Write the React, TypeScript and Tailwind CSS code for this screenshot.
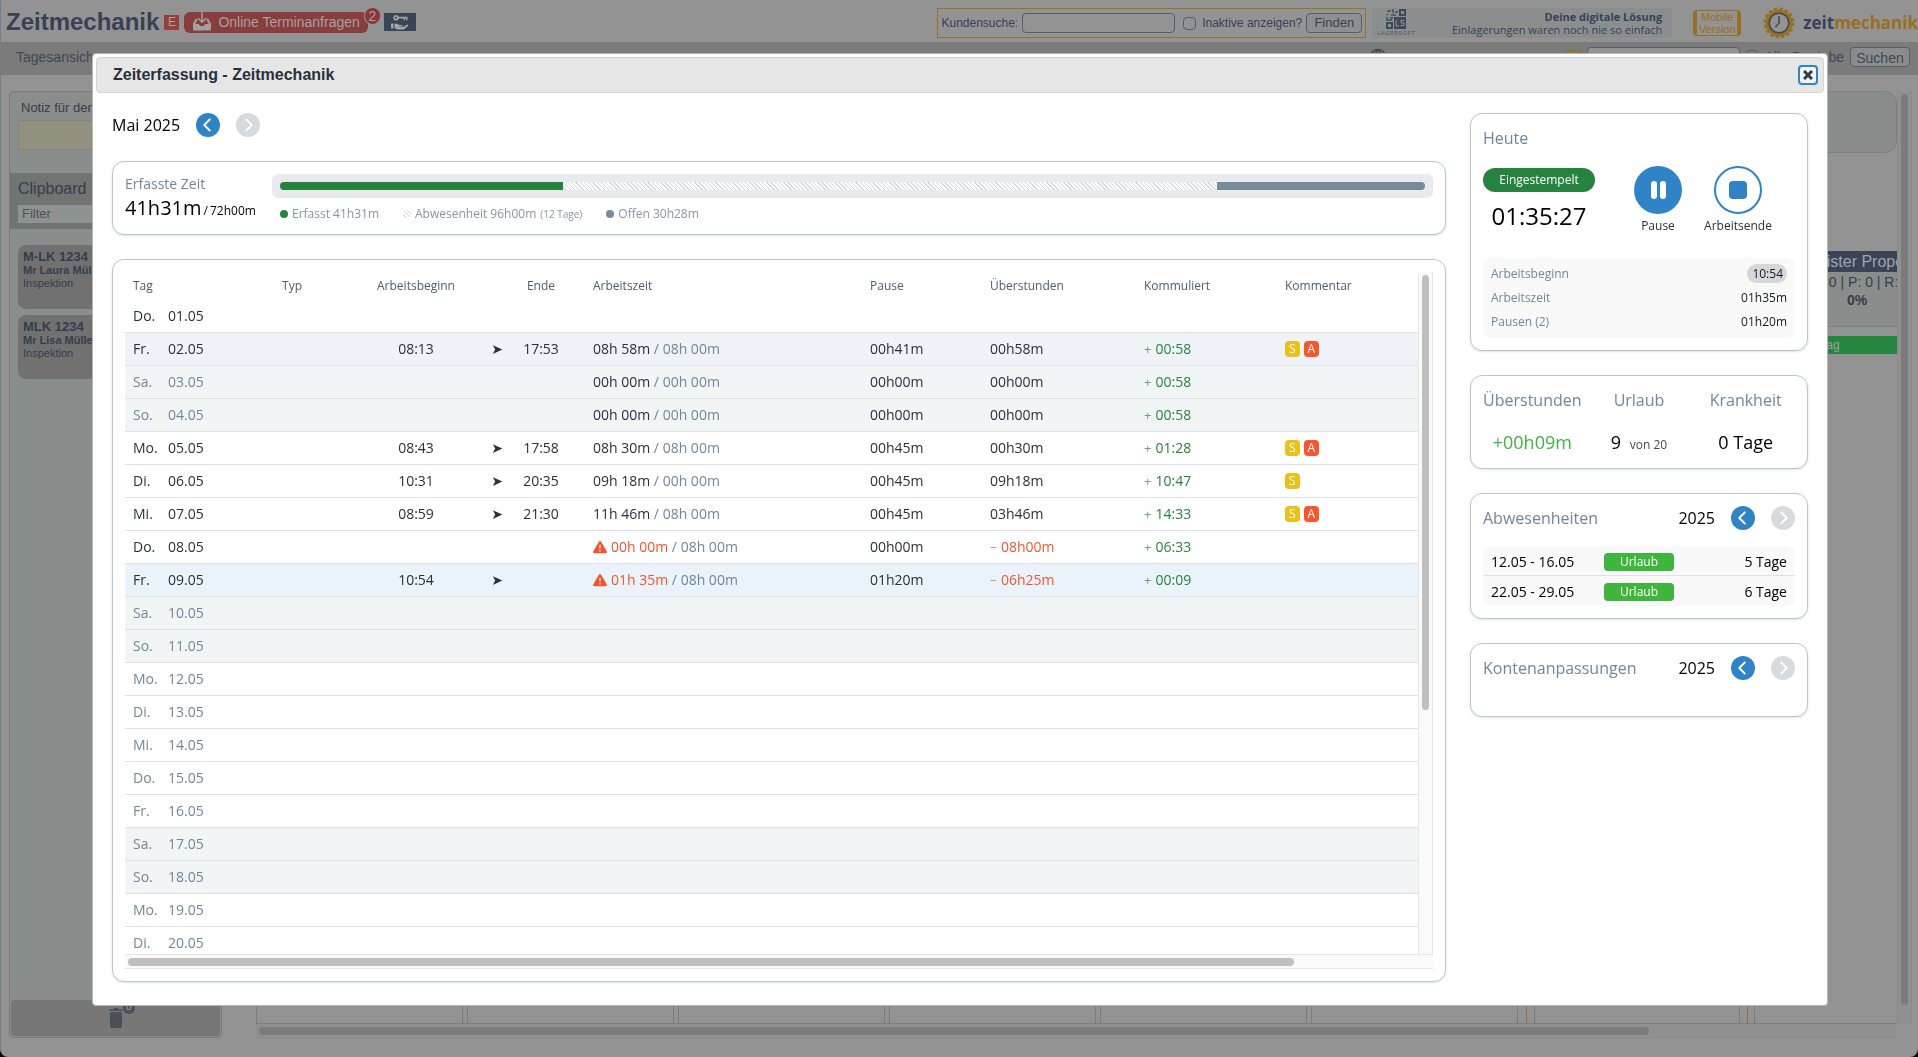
import React from 'react'
import { ChevronLeft, ChevronRight, Globe } from 'lucide-react'
import { FaTriangleExclamation } from 'react-icons/fa6'

interface Day {
  day: string
  date: string
  start?: string
  end?: string
  worked?: string
  target?: string
  pause?: string
  overtime?: string
  total?: string
  tags?: string[]
  state?: 'hover' | 'current'
}

const days: Day[] = [
  { day: 'Do.', date: '01.05' },
  { day: 'Fr.', date: '02.05', start: '08:13', end: '17:53', worked: '08h 58m', target: '08h 00m', pause: '00h41m', overtime: '00h58m', total: '00:58', tags: ['S', 'A'], state: 'hover' },
  { day: 'Sa.', date: '03.05', worked: '00h 00m', target: '00h 00m', pause: '00h00m', overtime: '00h00m', total: '00:58' },
  { day: 'So.', date: '04.05', worked: '00h 00m', target: '00h 00m', pause: '00h00m', overtime: '00h00m', total: '00:58' },
  { day: 'Mo.', date: '05.05', start: '08:43', end: '17:58', worked: '08h 30m', target: '08h 00m', pause: '00h45m', overtime: '00h30m', total: '01:28', tags: ['S', 'A'] },
  { day: 'Di.', date: '06.05', start: '10:31', end: '20:35', worked: '09h 18m', target: '00h 00m', pause: '00h45m', overtime: '09h18m', total: '10:47', tags: ['S'] },
  { day: 'Mi.', date: '07.05', start: '08:59', end: '21:30', worked: '11h 46m', target: '08h 00m', pause: '00h45m', overtime: '03h46m', total: '14:33', tags: ['S', 'A'] },
  { day: 'Do.', date: '08.05', worked: '00h 00m', target: '08h 00m', pause: '00h00m', overtime: '-08h00m', total: '06:33' },
  { day: 'Fr.', date: '09.05', start: '10:54', worked: '01h 35m', target: '08h 00m', pause: '01h20m', overtime: '-06h25m', total: '00:09', state: 'current' },
  { day: 'Sa.', date: '10.05' },
  { day: 'So.', date: '11.05' },
  { day: 'Mo.', date: '12.05' },
  { day: 'Di.', date: '13.05' },
  { day: 'Mi.', date: '14.05' },
  { day: 'Do.', date: '15.05' },
  { day: 'Fr.', date: '16.05' },
  { day: 'Sa.', date: '17.05' },
  { day: 'So.', date: '18.05' },
  { day: 'Mo.', date: '19.05' },
  { day: 'Di.', date: '20.05' },
]

const segments = [
  { name: 'erfasst', hours: 41.5, className: 'rounded-l bg-[#26833f]' },
  { name: 'abwesenheit', hours: 96, className: 'bg-[repeating-linear-gradient(45deg,#fff_0px,#fff_2px,#d5d8db_2px,#d5d8db_3px)]' },
  { name: 'offen', hours: 30.5, className: 'rounded-r bg-[#778b9b]' },
]

const card = 'rounded-xl border border-[#b9c6d0] bg-white p-3 shadow-sm'

function Pager({ label }: { label: string }) {
  return (
    <div className="flex h-6 items-center gap-4 text-base text-black">
      <span>{label}</span>
      <button aria-label="Zurück" className="flex size-6 items-center justify-center rounded-full bg-[#3084c6] text-white">
        <ChevronLeft size={24} strokeWidth={2} className="pr-0.5" />
      </button>
      <button aria-label="Weiter" disabled className="flex size-6 items-center justify-center rounded-full bg-[#d5dbde] text-white">
        <ChevronRight size={24} strokeWidth={2} className="pl-0.5" />
      </button>
    </div>
  )
}

function OnlineIcon() {
  return (
    <svg width="20" height="20" viewBox="0 0 20 20" fill="currentColor">
      <path d="M9.300 0h1.400v8.500l2.800-2.700 1 1L10 11.200 5.500 6.800l1-1 2.800 2.700z" />
      <path d="M4 6.500 1 11.500V17a1.500 1.500 0 0 0 1.500 1.500h15A1.500 1.500 0 0 0 19 17v-5.500l-3-5h-.8l-.7 1.400 2.300 4.100h-3.600L11.800 14H8.200l-1.400-2H3.200l2.300-4.100-.7-1.400z" />
    </svg>
  )
}

function KeyIcon() {
  return (
    <svg width="18" height="17" viewBox="0 0 18 17" fill="currentColor">
      <path fillRule="evenodd" d="M5 1a2.800 2.800 0 1 0 2.700 3.600h4.800V6.200H14V4.600h1v1.600h1.500V2.800H7.700A2.800 2.800 0 0 0 5 1zm0 1.800a1 1 0 1 1 0 2 1 1 0 0 1 0-2z" />
      <path d="M0 9.500h2.500v5H0zM3.500 9.800h3l2 1.200h2.500c1 0 1 1.300 0 1.300H8.500v.5h4l3.300-2.100c1-.6 2 .4 1.200 1.200L13.500 15c-.6.400-1 .6-2 .6H6L3.500 14z" />
    </svg>
  )
}

function GearLogo() {
  return (
    <svg width="32" height="32" viewBox="0 0 32 32">
      <circle cx="16" cy="16" r="14" fill="none" stroke="#966f20" strokeWidth="3" strokeDasharray="3.300 2.200" />
      <circle cx="16" cy="16" r="11.800" fill="#939393" stroke="#966f20" strokeWidth="3" />
      <circle cx="16" cy="16" r="9.800" fill="#939393" stroke="#3b4657" strokeWidth="1.500" />
      <path d="M16 9v7l-3.500 4" fill="none" stroke="#3b4657" strokeWidth="1.500" />
    </svg>
  )
}

function LagerLogo() {
  return (
    <div className="flex w-12 flex-col items-center">
      <svg width="20" height="20" viewBox="0 0 20 20" fill="#3f495b">
        <path d="M1 1h4v2H1zM6 0h2v4H6zM9 2h3v2H9zM0 5h3v1H0zM5 5h5v2H5zM0 8h2v4H0zM4 8h3v2H4zM1 10h5v2H1z" opacity=".7" />
        <path fillRule="evenodd" d="M13 0h7v7h-7zm2 2v3h3V2zM0 13h7v7H0zm2 2v3h3v-3z" />
        <path d="M8 8h12v12H8z" />
        <path d="M10 11v6h3M18 11.500h-3V14h3v2.500h-3.500" fill="none" stroke="#939696" />
      </svg>
      <span className="text-[6px] leading-2 tracking-widest text-[#4b5464]">LAGERSOFT</span>
    </div>
  )
}

function TrashIcon() {
  return (
    <svg width="14" height="20" viewBox="0 0 14 20" fill="#4b5055">
      <path d="M4.500 0h5v1.500H14V3H0V1.500h4.500zM1 4h12v14.500a1.500 1.500 0 0 1-1.500 1.500h-9A1.500 1.500 0 0 1 1 18.500z" />
    </svg>
  )
}

function Header() {
  return (
    <header className="flex h-[42px] items-center justify-between pl-[5px] text-[#384154]">
      <div className="flex items-center pt-0.5">
        <h1 className="text-2xl font-bold">Zeitmechanik</h1>
        <span className="mx-[5px] flex size-[15px] items-center justify-center bg-[#963f3b] text-xs text-[#b0a0a0]">E</span>
        <a href="#anfragen" className="relative flex h-[21px] items-center gap-1.5 rounded-md bg-[#873e3c] px-2 text-sm text-[#a7a0a0]">
          <OnlineIcon />
          Online Terminanfragen
          <span className="absolute -top-1 -right-3 flex h-4 w-[15px] items-center justify-center rounded-full bg-[#8b3735] text-sm ring-1 ring-[#939393]">2</span>
        </a>
        <a href="#vermietung" aria-label="Schlüssel" className="ml-4 flex h-[18px] w-8 items-center justify-center bg-[#3a4457] text-[#a0a3a8]">
          <KeyIcon />
        </a>
      </div>
      <div className="flex items-center pt-1">
        <form className="flex h-[30px] items-center border border-[#93722b] px-[3px] text-xs">
          <label htmlFor="kundensuche">Kundensuche:</label>
          <input id="kundensuche" className="ml-1 h-5 w-[153px] rounded-sm border border-[#565c69]" />
          <input id="inaktive" type="checkbox" className="mr-1.5 ml-2 size-[13px] appearance-none rounded-sm border border-[#565c69]" />
          <label htmlFor="inaktive">Inaktive anzeigen?</label>
          <button type="button" className="ml-1 h-5 w-14 rounded-sm border border-[#565c69] bg-[#8d8f90] text-[13px]">Finden</button>
        </form>
        <a href="#lagersoft" className="ml-1.5 flex h-[30px] w-[300px] items-center justify-between bg-[#8b8e8e] pr-2.5 font-[Open_Sans,sans-serif] text-[11px] leading-[13px]">
          <LagerLogo />
          <span className="text-right">
            <b className="block">Deine digitale Lösung</b>
            Einlagerungen waren noch nie so einfach
          </span>
        </a>
        <a href="#mobile" className="ml-[21px] h-[26px] w-12 rounded border-x-4 border-y border-[#966f20] text-center text-[11px] leading-3 text-[#966f20]">
          Mobile Version
        </a>
        <a href="#start" className="ml-[22px] flex items-center gap-2 font-[Open_Sans,sans-serif] text-[17px] font-bold">
          <GearLogo />
          <span>zeit<span className="text-[#966f20]">mechanik</span></span>
        </a>
      </div>
    </header>
  )
}

function Background() {
  return (
    <div className="flex h-screen flex-col overflow-hidden rounded-b-lg border-l border-[#71808f] bg-[#939393]">
      <Header />
      <nav className="flex h-[33px] shrink-0 items-center justify-between bg-[#7b7b7b] pr-2 pb-1 pl-[15px] text-sm text-[#3f4756]">
        <a href="#tag">Tagesansicht</a>
        <form className="flex items-center gap-1.5">
          <Globe size={18} className="mr-[174px]" />
          <i className="size-3.5 border-2 border-[#93722b]" />
          <input aria-label="Suche" className="h-5 w-[153px] rounded-sm border border-[#565c69] bg-[#939393]" />
          <input id="alle" type="checkbox" className="size-[13px] appearance-none rounded-sm border border-[#565c69]" />
          <label htmlFor="alle">Alle Betriebe</label>
          <button type="button" className="h-5 w-[60px] rounded-sm border border-[#565c69] bg-[#8a8d8d]">Suchen</button>
        </form>
      </nav>
      <div className="flex min-h-0 flex-1 pt-4 pb-[19px] pl-2">
        <aside className="flex w-[213px] shrink-0 flex-col rounded border border-[#777a7c] bg-[#8a8d8b] text-[#343d4d]">
          <div className="h-[81px] px-2 pt-1.5 text-[13px]">
            <label htmlFor="notiz" className="pl-[3px]">Notiz für den Tag</label>
            <input id="notiz" className="mt-0.5 block h-[30px] w-full border border-[#85857a] bg-[#929180]" />
          </div>
          <div className="h-14 bg-[#727373] px-2 pt-1 text-base">
            <h2>Clipboard (2)</h2>
            <input aria-label="Filter" placeholder="Filter" className="mt-1 block h-[18px] w-full bg-[#909191] px-1 text-[13px] placeholder:text-[#4b5362]" />
          </div>
          <div className="mt-4 flex flex-1 flex-col gap-1.5 px-2 text-[11px] leading-3">
            <article className="h-16 rounded-lg bg-[#717171] p-[5px]">
              <h3 className="text-[13px] leading-[14px] font-bold">M-LK 1234</h3>
              <b className="block leading-[13px]">Mr Laura Müller</b>
              Inspektion
            </article>
            <article className="h-16 rounded-lg bg-[#717171] p-[5px]">
              <h3 className="text-[13px] leading-[14px] font-bold">MLK 1234</h3>
              <b className="block leading-[13px]">Mr Lisa Müller</b>
              Inspektion
            </article>
          </div>
          <button aria-label="Papierkorb" className="m-px flex h-9 items-center justify-center rounded bg-[#777]">
            <span className="relative">
              <TrashIcon />
              <span className="absolute -top-2 -right-3 h-3.5 rounded-full bg-[#4b5055] px-[3px] text-[10px] leading-3.5 text-[#a0a3a8]">8</span>
            </span>
          </button>
        </aside>
        <section className="ml-[34px] flex min-w-0 flex-1 flex-col">
          <div className="h-[62px] shrink-0 rounded-xl border border-[#7c7f80] bg-[#898c8a]" />
          <div className="flex min-h-0 flex-1 gap-1 overflow-hidden border-b border-[#7c7c7c] pt-3">
            {[1, 2, 3, 4, 5, 6].map((n) => (
              <div key={n} className="w-[207px] shrink-0 border-x border-[#7c7c7c]" />
            ))}
            <div className="ml-1 w-[222px] shrink-0 border-x border-[#93722b] px-[7px]">
              <div className="h-full border-x border-[#7c7c7c]" />
            </div>
            <div className="ml-0.5 h-full w-[206px] shrink-0 border-x border-[#7c7c7c] text-center text-[#343d4d]">
              <div className="mt-[86px] h-[76px] border-b border-[#7c7c7c] bg-[#8a8d8b] leading-4">
                <h3 className="h-[21px] bg-[#3a4457] text-base leading-[21px] text-[#a0a3a8]">Meister Proper</h3>
                <p className="pt-0.5 text-sm leading-4">A: 80 | P: 0 | R: 0</p>
                <b className="text-sm">0%</b>
              </div>
              <div className="mt-[9px] h-[18px] bg-[#27853f] pl-[46px] text-left text-xs leading-[18px] text-[#a0a3a8]">Auftrag</div>
            </div>
          </div>
          <div className="h-3.5 shrink-0 border-b border-[#8a8a8a] bg-[#909090] px-[3px] pt-[3px]">
            <div className="h-2 w-[85%] rounded-full bg-[#7b7b7b]" />
          </div>
        </section>
        <div className="mr-1.5 mb-3.5 w-[15px] border-x border-[#8a8a8a] bg-[#909090] px-[3px] pt-[3px]">
          <div className="h-[98%] rounded-full bg-[#7b7b7b]" />
        </div>
      </div>
    </div>
  )
}

function Summary() {
  const sum = segments.reduce((acc, s) => acc + s.hours, 0)
  return (
    <section className={`${card} flex h-[74px] shrink-0`}>
      <div className="w-[147px] shrink-0">
        <h2 className="text-sm leading-5 text-[#71869a]">Erfasste Zeit</h2>
        <p className="flex items-baseline text-xs text-black">
          <span className="text-xl leading-7">41h31m</span>
          <span className="px-0.5">/</span>
          <span>72h00m</span>
        </p>
      </div>
      <div className="flex-1">
        <div className="flex h-6 items-center rounded-md bg-[#e8eaed] px-2">
          {segments.map((s) => (
            <div key={s.name} className={`h-2 ${s.className}`} style={{ width: `${(s.hours / sum) * 100}%` }} />
          ))}
        </div>
        <ul className="flex gap-6 px-2 pt-[7px] text-xs leading-[18px] text-[#8496a3]">
          <li className="flex items-center gap-1">
            <i className="size-2 rounded-full bg-[#26833f]" />
            Erfasst 41h31m
          </li>
          <li className="flex items-center gap-1">
            <i className="size-2 rounded-full bg-[repeating-linear-gradient(45deg,#fff_0px,#fff_2px,#d5d8db_2px,#d5d8db_3px)]" />
            Abwesenheit 96h00m <small className="text-[10px]">(12 Tage)</small>
          </li>
          <li className="flex items-center gap-1">
            <i className="size-2 rounded-full bg-[#778b9b]" />
            Offen 30h28m
          </li>
        </ul>
      </div>
    </section>
  )
}

function DayRow({ item }: { item: Day }) {
  const weekend = item.day === 'Sa.' || item.day === 'So.'
  const muted = weekend || item.date > '09.05'
  const negative = item.overtime?.startsWith('-')
  let bg = weekend ? 'bg-[#f1f5f6]' : 'bg-white'
  if (item.state === 'hover') bg = 'bg-[#eff3f8]'
  if (item.state === 'current') bg = 'bg-[#eaf3fb]'

  return (
    <tr className={`h-[33px] ${bg} ${muted ? 'text-[#71869a]' : 'text-[#28313b]'} [&>td]:border-b [&>td]:border-[#dde1e5]`}>
      <td className="pl-2">{item.day}</td>
      <td>{item.date}</td>
      <td />
      <td className="text-center">{item.start}</td>
      <td className="text-center font-[DejaVu_Sans,sans-serif] text-sm">{item.start && '➤'}</td>
      <td className="text-center">{item.end}</td>
      <td className="pl-6">
        {item.worked && (
          <span className="flex items-center gap-1 text-[#71869a]">
            {negative && <FaTriangleExclamation size={14} color="#f4552f" />}
            <span>
              <span className={negative ? 'text-[#f4552f]' : 'text-[#28313b]'}>{item.worked}</span> / {item.target}
            </span>
          </span>
        )}
      </td>
      <td className="text-[#28313b]">{item.pause}</td>
      <td className={negative ? 'text-[#f4552f]' : 'text-[#28313b]'}>
        {negative && <span className="pr-1 text-xs opacity-80">−</span>}
        {item.overtime?.replace('-', '')}
      </td>
      <td className="text-[#26833f]">
        {item.total && <span className="pr-1 text-[13px] opacity-70">+</span>}
        {item.total}
      </td>
      <td>
        <span className="flex gap-1">
          {item.tags?.map((tag) => (
            <span key={tag} className={`h-4 rounded px-1 text-xs leading-4 text-white ${tag === 'S' ? 'bg-[#eac01b]' : 'bg-[#f95630]'}`}>
              {tag}
            </span>
          ))}
        </span>
      </td>
    </tr>
  )
}

function TimeTable() {
  return (
    <section className={`${card} flex min-h-0 flex-1 flex-col`}>
      <div className="flex min-h-0 flex-1">
        <div className="min-w-0 flex-1 overflow-hidden">
          <table className="w-full table-fixed border-separate border-spacing-0 text-sm">
            <colgroup>
              <col className="w-[43px]" />
              <col className="w-[114px]" />
              <col className="w-[69px]" />
              <col className="w-[130px]" />
              <col className="w-8" />
              <col className="w-14" />
              <col className="w-[301px]" />
              <col className="w-[120px]" />
              <col className="w-[154px]" />
              <col className="w-[141px]" />
              <col />
            </colgroup>
            <thead>
              <tr className="h-7 text-left text-xs text-[#4b5c6d] [&>th]:font-normal">
                <th colSpan={2} className="pl-2">Tag</th>
                <th>Typ</th>
                <th className="text-center">Arbeitsbeginn</th>
                <th />
                <th className="text-center">Ende</th>
                <th className="pl-6">Arbeitszeit</th>
                <th>Pause</th>
                <th>Überstunden</th>
                <th>Kommuliert</th>
                <th>Kommentar</th>
              </tr>
            </thead>
            <tbody>
              {days.map((d) => (
                <DayRow key={d.date} item={d} />
              ))}
            </tbody>
          </table>
        </div>
        <div className="w-[15px] border-x border-[#e6e6e6] bg-[#fafafa] px-[3px] pt-[3px]">
          <div className="h-[64%] rounded-full bg-[#bfbfbf]" />
        </div>
      </div>
      <div className="h-[15px] shrink-0 border-y border-[#e6e6e6] bg-[#fafafa] px-[3px] pt-[3px]">
        <div className="h-2 w-[calc(90%-6px)] rounded-full bg-[#bfbfbf]" />
      </div>
    </section>
  )
}

function Today() {
  return (
    <section className={card}>
      <h2 className="text-base leading-6 text-[#71869a]">Heute</h2>
      <div className="mt-4 flex h-[92px] text-xs text-[#28313b]">
        <div className="mr-[23px] flex w-28 flex-col items-center pt-0.5">
          <span className="flex h-6 w-full items-center justify-center rounded-full bg-[#26833f] text-white">Eingestempelt</span>
          <time className="mt-2 text-2xl leading-8 text-black">01:35:27</time>
        </div>
        <button className="flex w-20 flex-col items-center">
          <span className="flex size-12 items-center justify-center gap-[3px] rounded-full bg-[#3084c6]">
            <i className="h-[18px] w-1.5 rounded-sm bg-white" />
            <i className="h-[18px] w-1.5 rounded-sm bg-white" />
          </span>
          <span className="pt-1">Pause</span>
        </button>
        <button className="flex w-20 flex-col items-center">
          <span className="flex size-12 items-center justify-center rounded-full border-2 border-[#3084c6]">
            <i className="size-[18px] rounded bg-[#3084c6]" />
          </span>
          <span className="pt-1">Arbeitsende</span>
        </button>
      </div>
      <dl className="grid grid-cols-[1fr_auto] rounded-lg bg-[#f9f9f9] px-2 py-1 text-xs leading-6 text-[#71869a] [&>dd]:text-right [&>dd]:text-[#15191d]">
        <dt>Arbeitsbeginn</dt>
        <dd>
          <span className="rounded-full bg-[#d5d8da] py-px pr-1 pl-[5px]">10:54</span>
        </dd>
        <dt>Arbeitszeit</dt>
        <dd>01h35m</dd>
        <dt>Pausen (2)</dt>
        <dd>01h20m</dd>
      </dl>
    </section>
  )
}

function Sidebar() {
  return (
    <aside className="flex w-[338px] shrink-0 flex-col gap-6">
      <Today />
      <section className={`${card} h-[94px]`}>
        <dl className="-mx-1 grid grid-flow-col grid-cols-3 grid-rows-[24px_auto] text-center leading-6 [&>dd]:pt-[18px] [&>dt]:text-[#71869a]">
          <dt>Überstunden</dt>
          <dd className="text-lg leading-6 text-[#3fb53e]">+00h09m</dd>
          <dt>Urlaub</dt>
          <dd className="text-lg leading-6 text-black">
            9 <span className="pl-1 text-xs text-[#3f4a56]">von 20</span>
          </dd>
          <dt>Krankheit</dt>
          <dd className="text-lg leading-6 text-black">0 Tage</dd>
        </dl>
      </section>
      <section className={card}>
        <div className="flex justify-between">
          <h2 className="text-base text-[#71869a]">Abwesenheiten</h2>
          <Pager label="2025" />
        </div>
        <table className="mt-4 w-full table-fixed border-separate border-spacing-0 overflow-hidden rounded-lg bg-[#f9f9f9] text-sm text-black">
          <tbody>
            {[
              ['12.05 - 16.05', '5 Tage'],
              ['22.05 - 29.05', '6 Tage'],
            ].map(([range, amount], i) => (
              <tr key={range} className={`h-[30px] [&>td]:border-[#dfe2e4] [&>td]:pt-0.5 ${i === 0 ? '[&>td]:border-b' : ''}`}>
                <td className="pl-2">{range}</td>
                <td className="text-center">
                  <span className="mx-auto flex h-[18px] w-[70px] items-center justify-center rounded bg-[#3fb53e] text-xs text-white">Urlaub</span>
                </td>
                <td className="pr-2 text-right">{amount}</td>
              </tr>
            ))}
          </tbody>
        </table>
      </section>
      <section className={`${card} h-[74px]`}>
        <div className="flex justify-between">
          <h2 className="text-base text-[#71869a]">Kontenanpassungen</h2>
          <Pager label="2025" />
        </div>
      </section>
    </aside>
  )
}

export default function App() {
  return (
    <div className="bg-black font-[Liberation_Sans,Arial,sans-serif]">
      <Background />
      <div className="fixed inset-0 flex pt-[53px] pr-[90px] pb-[51px] pl-[92px]">
        <div role="dialog" aria-labelledby="titel" className="flex min-w-0 flex-1 flex-col rounded-sm border border-[#b5b5b5] bg-white">
          <div className="mx-[3px] mt-[3px] flex h-9 shrink-0 items-center justify-between rounded-sm border border-[#d2d4d6] bg-[#e6e6e6] pr-[5px] pl-4">
            <h1 id="titel" className="text-base font-bold text-[#28303d]">Zeiterfassung - Zeitmechanik</h1>
            <button aria-label="Schließen" className="flex size-5 items-center justify-center rounded-sm border-2 border-[#3084c6] bg-[#f3f3f3] text-[#333b48]">
              <svg width="10" height="10" viewBox="0 0 10 10" stroke="currentColor" strokeWidth="3">
                <path d="M1 1l8 8M9 1L1 9" />
              </svg>
            </button>
          </div>
          <main className="flex min-h-0 flex-1 gap-6 px-[19px] pt-5 pb-[23px] font-[Open_Sans,sans-serif]">
            <div className="flex min-w-0 flex-1 flex-col gap-6">
              <Pager label="Mai 2025" />
              <Summary />
              <TimeTable />
            </div>
            <Sidebar />
          </main>
        </div>
      </div>
    </div>
  )
}
